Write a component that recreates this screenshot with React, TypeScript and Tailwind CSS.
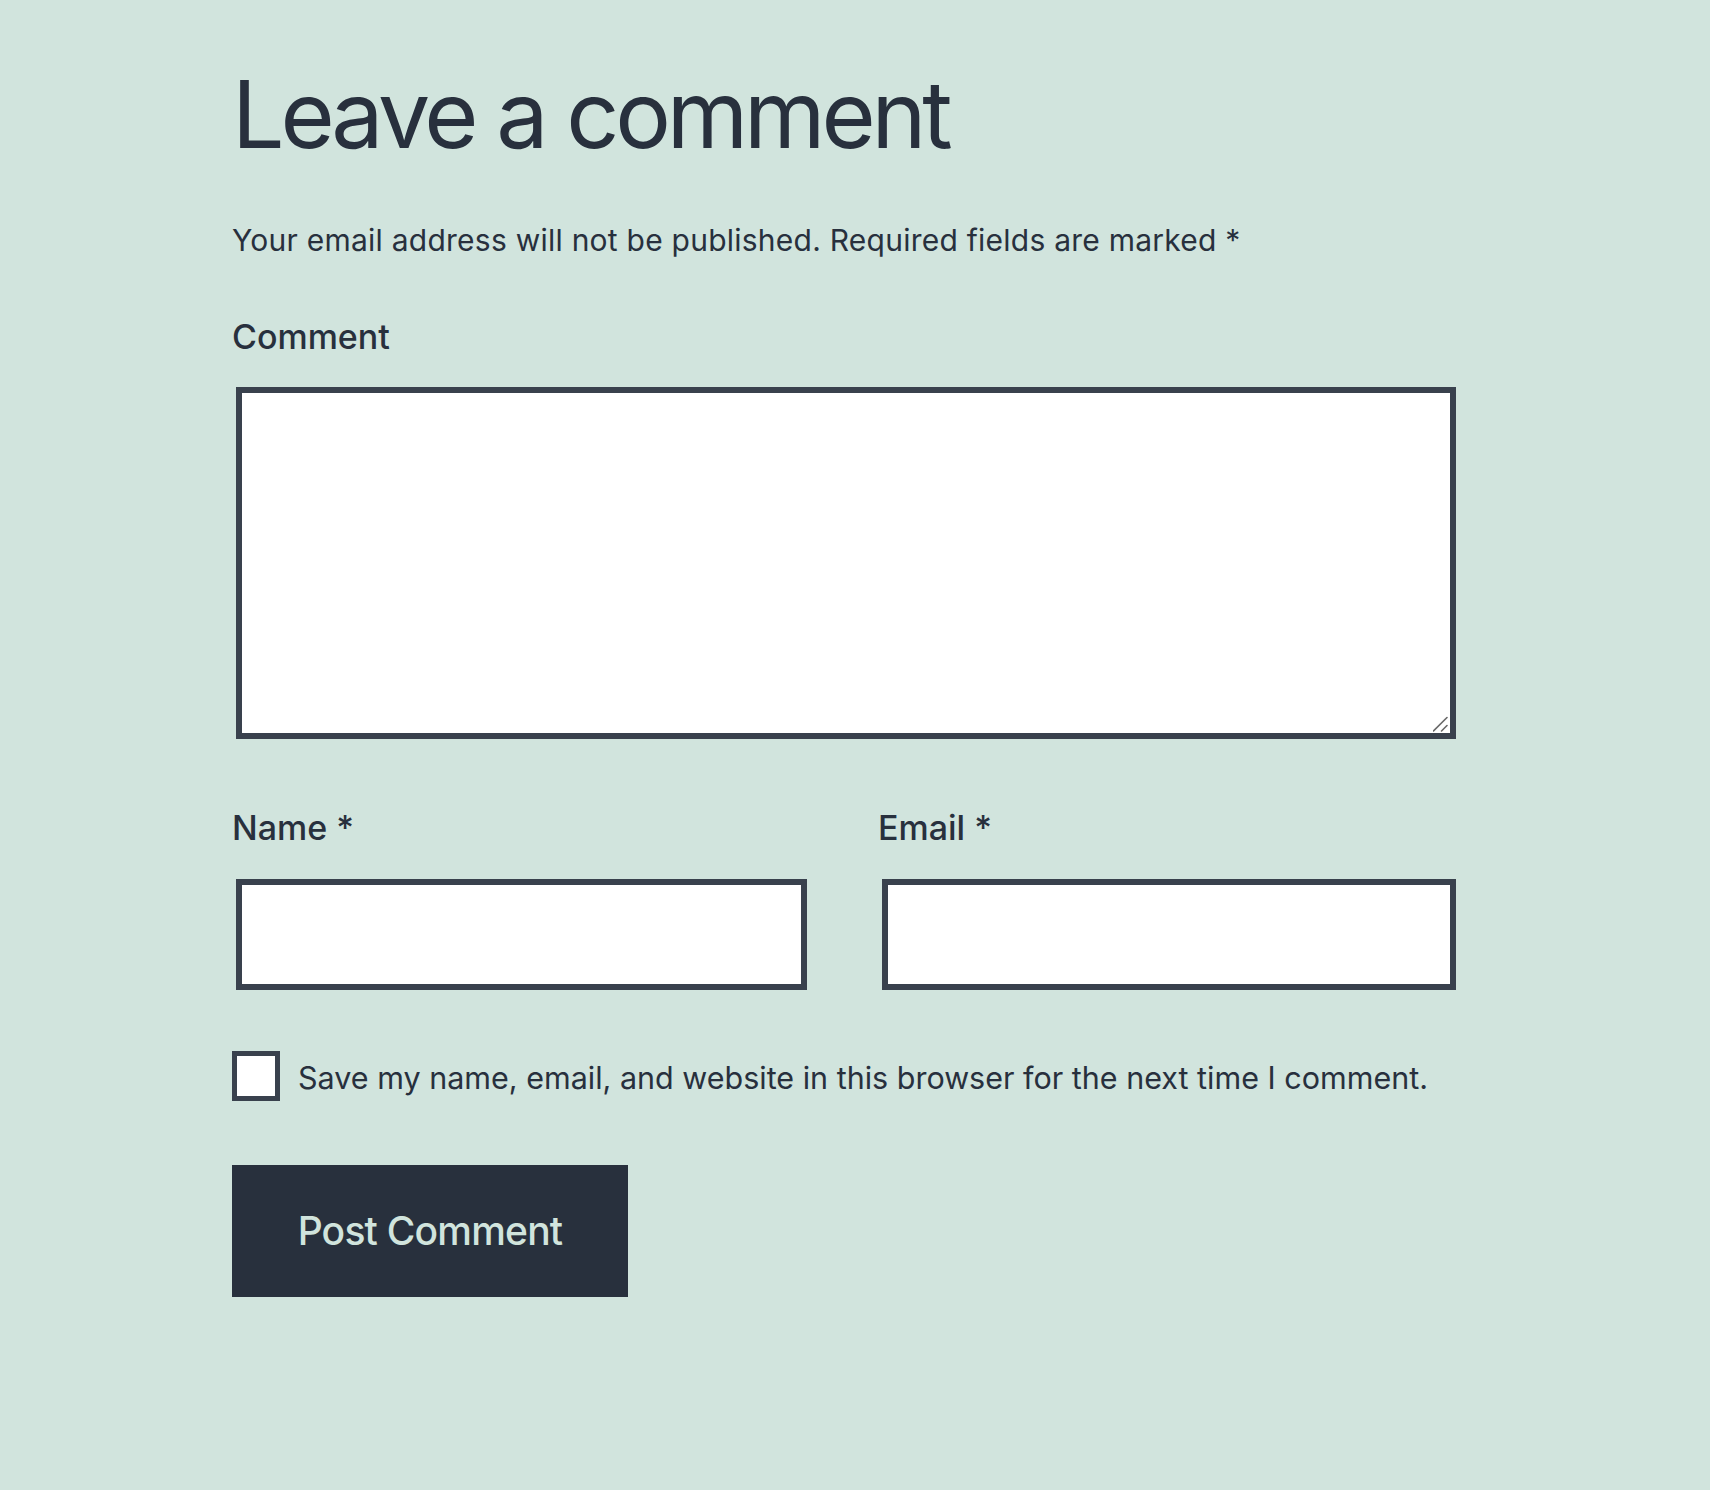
import React from "react";

export default function App() {
  return (
    <div
      className="min-h-screen w-full bg-[#d1e4dd] text-[#28303d]"
      style={{ fontFamily: "Inter, 'Noto Sans', sans-serif" }}
    >
      <div className="ml-[232px] w-[1228px] pt-[58px] pb-[120px] flex flex-col">
        <h2 className="text-[93px] leading-[112px] font-normal tracking-[-0.045em]">
          Leave a comment
        </h2>
        <p className="mt-[50px] text-[30px] leading-[40px] tracking-[0.008em]">
          Your email address will not be published. Required fields are marked *
        </p>
        <label className="mt-[55px] text-[34px] leading-[44px] font-medium">Comment</label>
        <div className="mt-[28px] ml-[4px] w-[1220px] h-[352px] relative">
          <textarea
            className="w-full h-full block bg-white border-[6px] border-[#39414d] outline-none resize-none"
            aria-label="Comment"
          />
          <svg
            className="absolute right-[6px] bottom-[6px] pointer-events-none"
            width="17"
            height="17"
            viewBox="0 0 17 17"
          >
            <line x1="0.5" y1="15" x2="14" y2="1.5" stroke="#686868" strokeWidth="1.6" strokeLinecap="round" />
            <line x1="8.5" y1="15" x2="14" y2="9.5" stroke="#686868" strokeWidth="1.6" strokeLinecap="round" />
          </svg>
        </div>
        <div className="mt-[67px] flex">
          <div className="w-[646px] flex flex-col">
            <label className="text-[34px] leading-[44px] font-medium">Name *</label>
            <input
              type="text"
              aria-label="Name"
              className="mt-[29px] ml-[4px] w-[571px] h-[111px] bg-white border-[6px] border-[#39414d] outline-none"
            />
          </div>
          <div className="w-[582px] flex flex-col">
            <label className="text-[34px] leading-[44px] font-medium">Email *</label>
            <input
              type="email"
              aria-label="Email"
              className="mt-[29px] ml-[4px] w-[574px] h-[111px] bg-white border-[6px] border-[#39414d] outline-none"
            />
          </div>
        </div>
        <div className="mt-[61px] flex items-start">
          <span className="w-[48px] h-[50px] shrink-0 bg-white border-[5px] border-[#39414d] block" />
          <span className="ml-[18px] mt-[5px] text-[30.5px] leading-[44px]">
            Save my name, email, and website in this browser for the next time I comment.
          </span>
        </div>
        <div className="mt-[64px]">
          <button className="w-[396px] h-[132px] bg-[#28303d] text-[#d1e4dd] text-[39px] font-medium tracking-[-0.02em] flex items-center justify-center">
            Post Comment
          </button>
        </div>
      </div>
    </div>
  );
}
